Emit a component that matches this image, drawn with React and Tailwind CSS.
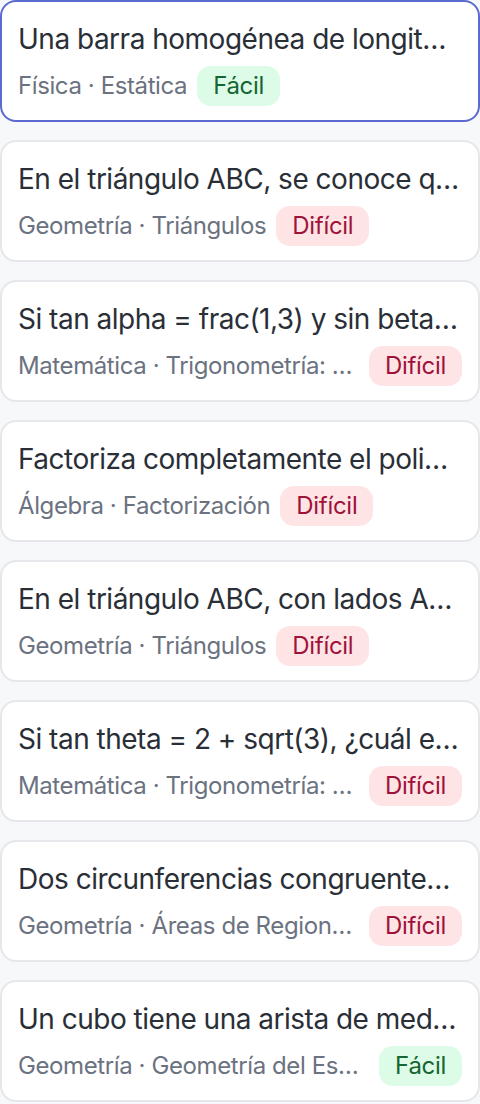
import React from 'react';

const problems = [
    { title: 'Una barra homogénea de longitud L y peso W se apoya sobre una pared', meta: 'Física · Estática', level: 'Fácil', active: true },
    { title: 'En el triángulo ABC, se conoce que el ángulo A mide', meta: 'Geometría · Triángulos', level: 'Difícil' },
    { title: 'Si tan alpha = frac(1,3) y sin beta = frac(1,2), calcula', meta: 'Matemática · Trigonometría: Ángulos Compuestos', level: 'Difícil' },
    { title: 'Factoriza completamente el polinomio', meta: 'Álgebra · Factorización', level: 'Difícil' },
    { title: 'En el triángulo ABC, con lados AB = 7', meta: 'Geometría · Triángulos', level: 'Difícil' },
    { title: 'Si tan theta = 2 + sqrt(3), ¿cuál es el valor de', meta: 'Matemática · Trigonometría: Ángulos', level: 'Difícil' },
    { title: 'Dos circunferencias congruentes de radio 4', meta: 'Geometría · Áreas de Regiones Sombreadas', level: 'Difícil' },
    { title: 'Un cubo tiene una arista de medida 6 cm', meta: 'Geometría · Geometría del Espacio', level: 'Fácil' },
];

const LevelBadge = ({ level }) => {
    const easy = level === 'Fácil';
    return (
        <span
            className={`shrink-0 h-10 px-4 flex items-center rounded-[14px] text-[24px] tracking-[-0.3px] ${
                easy ? 'bg-[#dcfce7] text-[#166534]' : 'bg-[#ffe4e6] text-[#9f1239]'
            }`}
        >
            {level}
        </span>
    );
};

const ProblemCard = ({ problem }) => (
    <div
        className={`bg-white rounded-2xl border-2 px-4 pt-[17px] pb-[14px] ${
            problem.active ? 'border-[#5b6ad0]' : 'border-[#e5e7eb]'
        }`}
    >
        <p className="truncate text-[28px] leading-[40px] tracking-[-0.5px] text-[#2a2f37]">{problem.title}</p>
        <div className="mt-[7px] flex items-center gap-2.5">
            <span className="min-w-0 truncate text-[24px] leading-[40px] tracking-[-0.4px] text-[#6b7280]">
                {problem.meta}
            </span>
            <LevelBadge level={problem.level} />
        </div>
    </div>
);

export default function App() {
    return (
        <div
            className="min-h-screen bg-[#f7f8fa] flex flex-col gap-[18px]"
            style={{ fontFamily: "Inter, 'Noto Sans', sans-serif" }}
        >
            {problems.map((p, i) => (
                <ProblemCard key={i} problem={p} />
            ))}
        </div>
    );
}
